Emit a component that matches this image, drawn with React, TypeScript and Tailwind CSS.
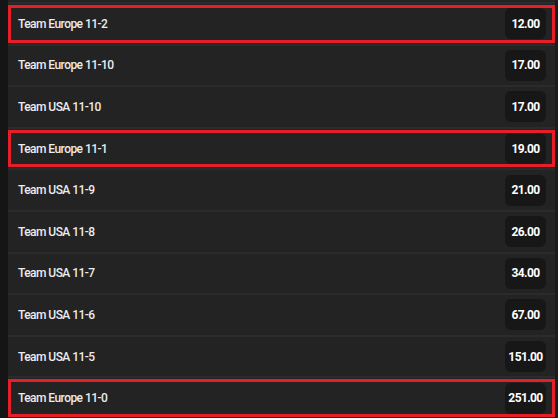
import React from "react";

type Outcome = { label: string; odds: string; picked?: boolean };

const outcomes: Outcome[] = [
  { label: "Team Europe 11-2", odds: "12.00", picked: true },
  { label: "Team Europe 11-10", odds: "17.00" },
  { label: "Team USA 11-10", odds: "17.00" },
  { label: "Team Europe 11-1", odds: "19.00", picked: true },
  { label: "Team USA 11-9", odds: "21.00" },
  { label: "Team USA 11-8", odds: "26.00" },
  { label: "Team USA 11-7", odds: "34.00" },
  { label: "Team USA 11-6", odds: "67.00" },
  { label: "Team USA 11-5", odds: "151.00" },
  { label: "Team Europe 11-0", odds: "251.00", picked: true },
];

// ── Single market row ─────────────────────────────────────────────────────────
const OutcomeRow = ({ label, odds, picked }: Outcome) => (
  <div className="relative flex h-[42px] items-center justify-between border-t-2 border-[#2b2b2b] bg-[#232323] pl-[10px] pr-[9px]">
    <span className="text-[12px] font-medium tracking-[-0.55px] text-[#ececec]">
      {label}
    </span>
    <span className="flex h-[31px] w-[41px] items-center justify-center rounded-md bg-[#171717] text-[12px] font-bold tracking-[-0.6px] text-white">
      {odds}
    </span>
    {picked && (
      <div className="pointer-events-none absolute inset-x-0 top-[1px] bottom-[1px] border-[3px] border-[#e61e27]" />
    )}
  </div>
);

export default function App() {
  return (
    <div
      className="flex h-[418px] w-[558px] overflow-hidden bg-[#151515]"
      style={{ fontFamily: "Roboto, 'Liberation Sans', sans-serif" }}
    >
      <div className="w-[8px] shrink-0" />
      <div className="flex w-[547px] flex-col">
        <div className="h-[2px] shrink-0 bg-[#232323]" />
        {outcomes.map((o) => (
          <OutcomeRow key={o.label} {...o} />
        ))}
      </div>
      <div className="w-[3px] shrink-0 bg-[#1b1b1b]" />
    </div>
  );
}
